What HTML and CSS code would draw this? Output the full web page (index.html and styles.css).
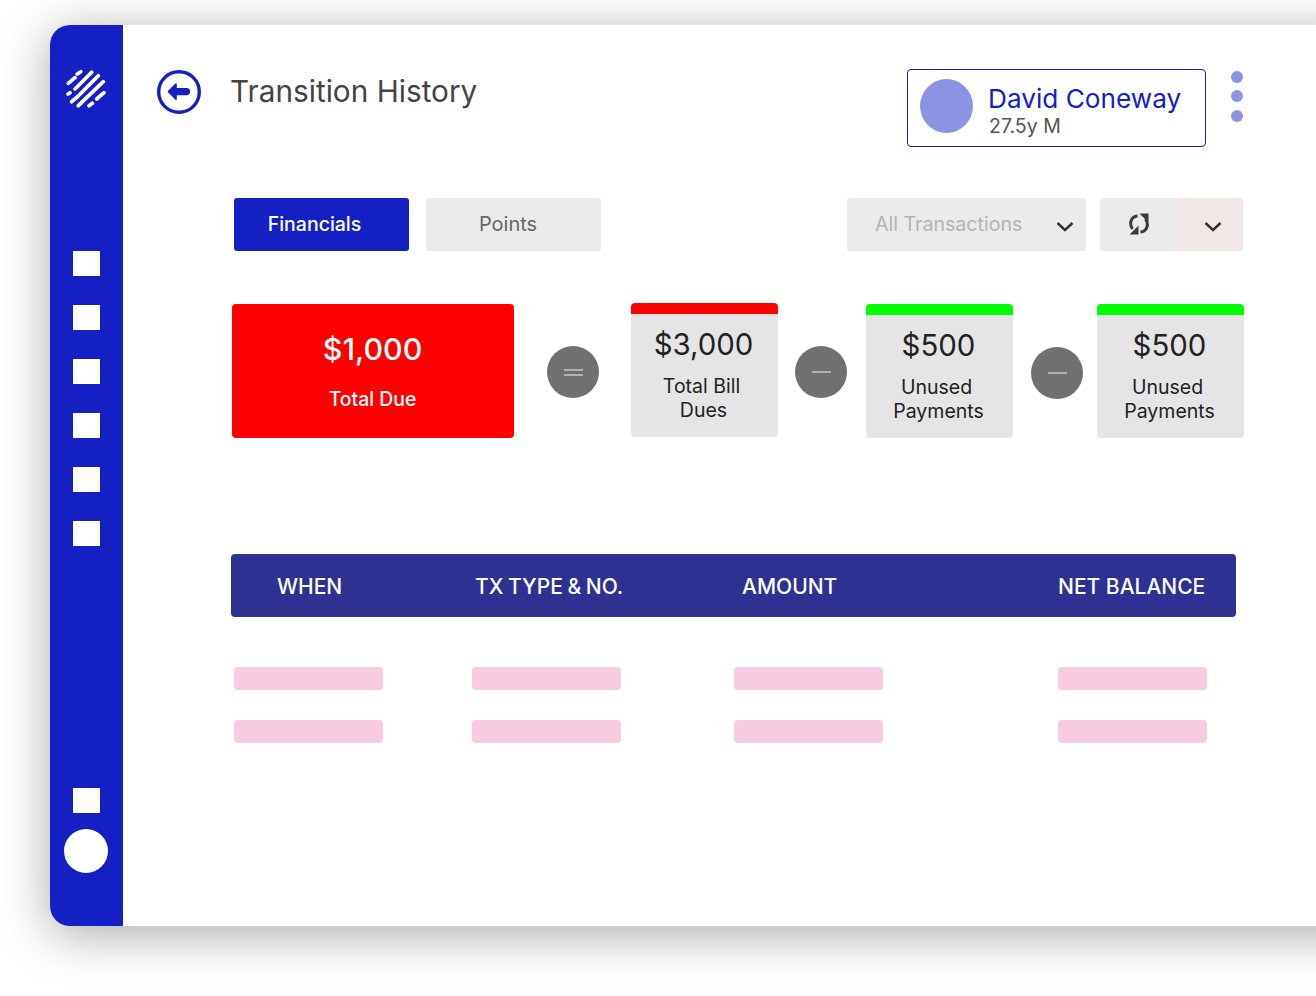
FILE: index.html
```html
<!DOCTYPE html>
<html lang="en">
<head>
<meta charset="utf-8">
<title>Transition History</title>
<link rel="stylesheet" href="styles.css">
</head>
<body>
<div class="app">
  <nav class="sidebar">
    <svg class="logo" width="40" height="40" viewBox="0 0 40 40" fill="none" stroke="#fff" stroke-width="3.700" stroke-linecap="round">
      <path d="M11.300 5 14.700 2.700M2.300 14.300 9 8.700M9 20 25.700 3.300M14 25.300 32.300 6.700M12.300 36.700 37.300 12.700M2 25 4 23.700M5.700 32.700 12.300 27M23 36.700 26.300 34.300M30.700 30 38 23.700"/>
    </svg>
    <ul class="nav-list">
      <li class="nav-square"></li><li class="nav-square"></li><li class="nav-square"></li>
      <li class="nav-square"></li><li class="nav-square"></li><li class="nav-square"></li>
    </ul>
    <div class="nav-bottom">
      <div class="nav-square"></div>
      <div class="nav-avatar"></div>
    </div>
  </nav>
  <main class="main">
    <header class="topbar">
      <svg class="back" width="44" height="44" viewBox="0 0 44 44" fill="none">
        <circle cx="22" cy="22" r="20.300" stroke="#1420c4" stroke-width="3.400"/>
        <path d="M11.500 21.600 19 14V18.800H29.500A2.800 2.800 0 0 1 29.500 24.400H19V29.200Z" fill="#1420c4" stroke="#1420c4" stroke-linejoin="round" stroke-width="1.600"/>
      </svg>
      <h1 class="title">Transition History</h1>
      <div class="patient">
        <div class="patient-photo"></div>
        <div class="patient-info">
          <div class="patient-name">David Coneway</div>
          <div class="patient-meta">27.5y M</div>
        </div>
      </div>
      <div class="dots"><span></span><span></span><span></span></div>
    </header>

    <section class="controls">
      <button class="tab tab-active">Financials</button>
      <button class="tab tab-plain">Points</button>
      <div class="select">
        <span>All Transactions</span>
        <svg width="18" height="11" viewBox="0 0 18 11" fill="none" stroke="#333" stroke-width="2.400"><path d="M1.500 2 9 9 16.500 2"/></svg>
      </div>
      <div class="split">
        <div class="split-left">
          <svg width="22" height="22" viewBox="0 0 22 22" fill="none">
            <path d="M9.500 3C3.500 3.500 .5 10 4.500 16M12.500 19C18.500 18.500 21.500 12 17.500 6" stroke="#3a3a3a" stroke-width="3"/>
            <path d="M1.500 21.500H10.500V12.500ZM11.500 .5H20.500V9.500Z" fill="#3a3a3a"/>
          </svg>
        </div>
        <div class="split-right">
          <svg width="18" height="11" viewBox="0 0 18 11" fill="none" stroke="#333" stroke-width="2.400"><path d="M1.500 2 9 9 16.500 2"/></svg>
        </div>
      </div>
    </section>

    <section class="summary">
      <div class="total">
        <div class="total-amount">$1,000</div>
        <div class="total-label">Total Due</div>
      </div>
      <div class="op op-1"><i></i><i></i></div>
      <div class="stat stat-red stat-first">
        <div class="stat-amount">$3,000</div>
        <div class="stat-label">Total Bill<br><span class="shift">Dues</span></div>
      </div>
      <div class="op op-2"><i></i></div>
      <div class="stat stat-green">
        <div class="stat-amount">$500</div>
        <div class="stat-label">Unused<br><span class="shift">Payments</span></div>
      </div>
      <div class="op op-3"><i></i></div>
      <div class="stat stat-green stat-last">
        <div class="stat-amount">$500</div>
        <div class="stat-label">Unused<br><span class="shift">Payments</span></div>
      </div>
    </section>

    <section class="table">
      <div class="thead">
        <span class="th-when">WHEN</span>
        <span class="th-type">TX TYPE &amp; NO.</span>
        <span class="th-amount">AMOUNT</span>
        <span class="th-balance">NET BALANCE</span>
      </div>
      <div class="skeleton-row"><i></i><i></i><i></i><i></i></div>
      <div class="skeleton-row"><i></i><i></i><i></i><i></i></div>
    </section>
  </main>
</div>
</body>
</html>
```
FILE: styles.css
```css
* { box-sizing: border-box; }
html, body { margin: 0; padding: 0; }
body {
  width: 1316px;
  height: 996px;
  overflow: hidden;
  background: #fff;
  font-family: Inter, "Liberation Sans", sans-serif;
}
.app {
  display: flex;
  width: 1320px;
  height: 901px;
  margin: 25px 0 0 50px;
  background: #fff;
  border-radius: 20px 0 0 20px;
  box-shadow: 0 8px 50px rgba(0, 0, 0, .34);
}
.sidebar {
  flex: 0 0 73px;
  display: flex;
  flex-direction: column;
  align-items: center;
  padding-right: 1px;
  background: #1420c4;
  border-radius: 20px 0 0 20px;
}
.logo { margin: 44px 0 0 0; flex: none; }
.nav-list {
  list-style: none;
  margin: 142px 0 0;
  padding: 0 0 0 1px;
  display: flex;
  flex-direction: column;
  gap: 29px;
}
.nav-square { width: 27px; height: 25px; background: #fff; }
.nav-bottom {
  margin-top: auto;
  margin-bottom: 53px;
  display: flex;
  flex-direction: column;
  align-items: center;
  gap: 16px;
}
.nav-bottom .nav-square { margin-left: 1px; }
.nav-avatar { width: 44px; height: 44px; border-radius: 50%; background: #fff; }

.main { flex: 1; min-width: 0; padding-top: 44px; }

.topbar { display: flex; align-items: flex-start; height: 78px; padding-left: 34px; }
.back { flex: none; margin-top: 1px; }
.title {
  margin: 2px 0 0 29px;
  width: 677px;
  font-size: 29.750px;
  line-height: 40px;
  font-weight: 400;
  color: #444;
}
.patient {
  flex: none;
  width: 299px;
  height: 78px;
  border: 1px solid #1420c4;
  border-radius: 4px;
  display: flex;
  align-items: center;
  padding-left: 12px;
}
.patient-photo { width: 53px; height: 54px; margin-top: -4px; border-radius: 50%; background: #8c93e4; }
.patient-info { margin: 6px 0 0 15px; }
.patient-name { font-size: 26.200px; line-height: 30px; color: #1420c4; }
.patient-meta { font-size: 19.500px; line-height: 24px; color: #555; margin-left: 1px; }
.dots { display: flex; flex-direction: column; gap: 7px; margin: 2px 0 0 25px; }
.dots span { width: 12px; height: 12px; border-radius: 50%; background: #8c93e4; }
.dots span:last-child { margin-top: 1px; }

.controls { display: flex; margin: 51px 0 0 111px; height: 53px; }
.tab {
  width: 175px;
  height: 53px;
  border: 0;
  border-radius: 3px;
  font: 400 20px Inter, "Liberation Sans", sans-serif;
  padding: 0 0 2px;
}
.tab-active { padding-right: 14px; background: #1420c4; color: #fff; font-size: 19.500px; font-weight: 500; }
.tab-plain { margin-left: 17px; padding-right: 11px; background: #ebebeb; color: #666; }
.select {
  width: 239px;
  margin-left: 246px;
  background: #ebebeb;
  border-radius: 3px;
  display: flex;
  align-items: center;
  justify-content: space-between;
  padding: 0 12px 2px 28px;
  font-size: 19.600px;
  color: #b4b4b4;
}
.select svg { margin-top: 6px; }
.split { width: 143px; margin-left: 14px; display: flex; border-radius: 3px; overflow: hidden; }
.split-left { width: 77px; background: #ebebeb; display: flex; align-items: center; justify-content: center; padding: 0 0 1px 1px; }
.split-right { flex: 1; background: #f2e7e7; display: flex; align-items: center; justify-content: center; padding: 4px 0 0 6px; }

.summary { display: flex; align-items: flex-start; margin: 53px 0 0 109px; height: 134px; }
.total {
  width: 282px;
  height: 134px;
  background: #f00;
  border-radius: 4px;
  color: #fff;
  text-align: center;
  padding: 25px 1px 0 0;
}
.total-amount { font-size: 30.400px; line-height: 40px; font-weight: 500; }
.total-label { margin-top: 16px; font-size: 19.400px; line-height: 28px; font-weight: 500; }
.op {
  flex: none;
  width: 52px;
  height: 52px;
  margin-top: 42px;
  border-radius: 50%;
  background: #707070;
  display: flex;
  flex-direction: column;
  align-items: center;
  justify-content: center;
  gap: 3px;
}
.op i { width: 19px; height: 2px; background: #b0b0b0; }
.op-1 { margin-left: 33px; }
.op-2 { margin-left: 17px; }
.op-3 { margin-left: 18px; margin-top: 43px; }
.stat {
  flex: none;
  width: 147px;
  height: 134px;
  background: #e5e5e5;
  border-radius: 4px;
  border-top: 11px solid #0f0;
  text-align: center;
  color: #222;
  padding-top: 11px;
  margin-left: 19px;
}
.stat-red { border-top-color: #f00; }
.stat-first { margin: -1px 0 0 32px; }
.stat-last { margin-left: 14px; }
.stat-amount { padding-right: 2px; font-size: 29.400px; line-height: 40px; }
.stat-label { margin-top: 9px; padding-right: 6px; font-size: 19.500px; line-height: 24px; }
.shift { position: relative; left: 2px; }

.table { margin: 116px 0 0 108px; width: 1005px; }
.thead {
  height: 63px;
  background: #2e3192;
  border-radius: 4px;
  display: grid;
  grid-template-columns: 198px 267px 316px auto;
  align-items: center;
  padding: 1px 0 0 46px;
  color: #fff;
  font-size: 21px;
  font-weight: 500;
}
.thead span { white-space: nowrap; }
.th-type { word-spacing: -1px; }
.skeleton-row {
  display: grid;
  grid-template-columns: 238px 262px 324px 149px;
  margin: 50px 0 0 3px;
}
.skeleton-row + .skeleton-row { margin-top: 30px; }
.skeleton-row i { height: 23px; width: 149px; border-radius: 4px; background: #f9cbe1; }
```
